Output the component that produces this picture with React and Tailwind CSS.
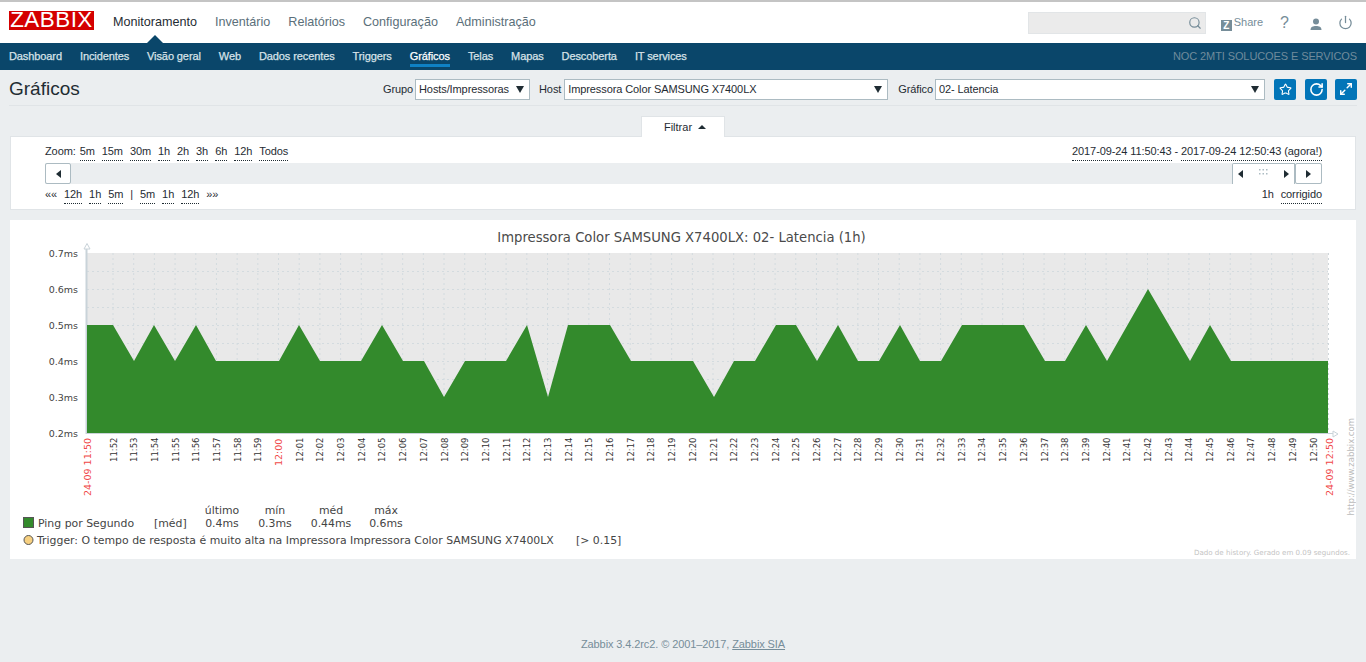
import { Search, Power, Star, RotateCw, Maximize2 } from 'lucide-react';

const mainMenu = ['Monitoramento', 'Inventário', 'Relatórios', 'Configuração', 'Administração'];
const subMenu = ['Dashboard', 'Incidentes', 'Visão geral', 'Web', 'Dados recentes', 'Triggers', 'Gráficos', 'Telas', 'Mapas', 'Descoberta', 'IT services'];
const zoomLinks = ['5m', '15m', '30m', '1h', '2h', '3h', '6h', '12h', 'Todos'];

// [x, value] pairs read off the graph
const points = [
  [87, 0.5], [113, 0.5], [134, 0.4], [154, 0.5], [175, 0.4], [196, 0.5], [216, 0.4], [279, 0.4], [299, 0.5], [320, 0.4],
  [361, 0.4], [382, 0.5], [403, 0.4], [424, 0.4], [444, 0.3], [465, 0.4], [506, 0.4], [527, 0.5], [548, 0.3], [568, 0.5],
  [610, 0.5], [631, 0.4], [693, 0.4], [714, 0.3], [734, 0.4], [755, 0.4], [776, 0.5], [796, 0.5], [817, 0.4], [838, 0.5],
  [858, 0.4], [879, 0.4], [900, 0.5], [920, 0.4], [941, 0.4], [962, 0.5], [1024, 0.5], [1045, 0.4], [1065, 0.4], [1086, 0.5],
  [1107, 0.4], [1148, 0.6], [1190, 0.4], [1210, 0.5], [1231, 0.4], [1328, 0.4],
];

const valueY = (v) => 433 - (v - 0.2) * 360;
const areaPath = `M87 433 ${points.map(([x, v]) => `L${x} ${valueY(v)}`).join(' ')} L1328 433 Z`;

const minuteLabels = [];
for (let m = 0; m <= 58; m++) {
  const total = 11 * 60 + 52 + m;
  const label = `${Math.floor(total / 60)}:${String(total % 60).padStart(2, '0')}`;
  minuteLabels.push({ label, x: 113 + m * 20.69, red: label === '12:00' });
}

const DottedLink = ({ children }) => (
  <span className="border-b border-dotted border-[#1f2c33]">{children}</span>
);

const Select = ({ width, children }) => (
  <div className={`${width} h-[21px] bg-white border border-[#acbbc2] flex items-center justify-between pl-[3px] pr-[5px]`}>
    <span className="tracking-[-0.1px]">{children}</span>
    <span className="w-0 h-0 border-x-[4px] border-x-transparent border-t-[7px] border-t-[#1f2c33]" />
  </div>
);

const IconButton = ({ children }) => (
  <div className="w-[22px] h-[21px] rounded-[2px] bg-[#0275b8] flex items-center justify-center text-white">{children}</div>
);

const ArrowLeft = () => <span className="w-0 h-0 border-y-[4px] border-y-transparent border-r-[5px] border-r-[#1f2c33]" />;
const ArrowRight = () => <span className="w-0 h-0 border-y-[4px] border-y-transparent border-l-[5px] border-l-[#1f2c33]" />;

const UserIcon = () => (
  <svg width="14" height="14" viewBox="0 0 14 14" className="ml-[20px] mt-[2px]" fill="#768d99">
    <circle cx="7" cy="4.5" r="3" />
    <path d="M1.5 13 C1.5 9.8 4 9 7 9 C10 9 12.5 9.8 12.5 13 Z" />
  </svg>
);

const Grip = () => (
  <svg width="9" height="6" viewBox="0 0 9 6" className="-mt-[4px]" fill="#acbbc2">
    {[0, 4].map((y) => [0, 3.5, 7].map((x) => <rect key={`${x}-${y}`} x={x} y={y} width="1.5" height="1.5" />))}
  </svg>
);

const Graph = () => (
  <svg width="1346" height="339" viewBox="10 220 1346 339" className="block" style={{ fontFamily: '"DejaVu Sans", sans-serif' }}>
    <text x="681.5" y="242" textAnchor="middle" fontSize="13.2" fill="#4a4a4a">Impressora Color SAMSUNG X7400LX: 02- Latencia (1h)</text>

    <rect x="87" y="253" width="1241" height="180" fill="#e9e9e9" />
    {[271, 289, 307, 325, 343, 361, 379, 397, 415].map((y) => (
      <line key={y} x1="87" x2="1328" y1={y + 0.5} y2={y + 0.5} stroke="#d3dbdf" strokeDasharray="2 3" />
    ))}
    {minuteLabels.map(({ x, label }) => (
      <line key={label} x1={x} x2={x} y1="253" y2="433" stroke="#d3dbdf" strokeDasharray="2 3" />
    ))}
    <line x1="1328.5" x2="1328.5" y1="253" y2="433" stroke="#cfd6da" strokeDasharray="2 3" />

    <line x1="86.5" x2="86.5" y1="248" y2="434" stroke="#c9d3d9" strokeWidth="2" />
    <path d={areaPath} fill="#338a2c" />
    <line x1="86" x2="1333" y1="433.5" y2="433.5" stroke="#c9d3d9" />
    <path d="M84 249 L87 243.5 L90 249 Z" fill="#fff" stroke="#c9d3d9" />
    <path d="M1333 431 L1338 434 L1333 437 Z" fill="#fff" stroke="#c9d3d9" />

    {[0.7, 0.6, 0.5, 0.4, 0.3, 0.2].map((v) => (
      <text key={v} x="78" y={valueY(v) + 3.5} textAnchor="end" fontSize="9.5" fill="#444">{v}ms</text>
    ))}

    {minuteLabels.map(({ label, x, red }) => (
      <text
        key={label}
        transform={`translate(${x + 3.5} ${red ? 466 : 462}) rotate(-90)`}
        fontSize={red ? 9.5 : 8.5}
        fill={red ? '#f04848' : '#333'}
      >
        {label}
      </text>
    ))}
    <text transform="translate(91 496) rotate(-90)" fontSize="9.5" fill="#f04848">24-09 11:50</text>
    <text transform="translate(1333 496) rotate(-90)" fontSize="9.5" fill="#f04848">24-09 12:50</text>
    <text transform="translate(1354 515.5) rotate(-90)" fontSize="8.5" fill="#bbb">http://www.zabbix.com</text>

    <g fontSize="10.9" fill="#444">
      <text x="222" y="514" textAnchor="middle">último</text>
      <text x="275" y="514" textAnchor="middle">mín</text>
      <text x="331" y="514" textAnchor="middle">méd</text>
      <text x="386" y="514" textAnchor="middle">máx</text>

      <rect x="23.5" y="517.5" width="10" height="10" fill="#338a2c" stroke="#555" />
      <text x="38" y="527">Ping por Segundo</text>
      <text x="154" y="527">[méd]</text>
      <text x="222" y="527" textAnchor="middle">0.4ms</text>
      <text x="275" y="527" textAnchor="middle">0.3ms</text>
      <text x="331" y="527" textAnchor="middle">0.44ms</text>
      <text x="386" y="527" textAnchor="middle">0.6ms</text>

      <circle cx="28.5" cy="540" r="4.5" fill="#f7d080" stroke="#555" />
      <text x="37" y="544">Trigger: O tempo de resposta é muito alta na Impressora Impressora Color SAMSUNG X7400LX</text>
      <text x="576" y="544">[&gt; 0.15]</text>
    </g>
    <text x="1350" y="555" textAnchor="end" fontSize="7.1" fill="#c4c4c4">Dado de history. Gerado em 0.09 segundos.</text>
  </svg>
);

export default function App() {
  return (
    <div className="min-h-[662px] bg-[#ebeef0] flex flex-col text-[11px] text-[#1f2c33]" style={{ fontFamily: '"Liberation Sans", Arial, sans-serif' }}>
      {/* Top menu */}
      <header className="h-[43px] bg-white border-t-2 border-[#c4c4c4] flex items-center pl-[9px] pr-[13px]">
        <div className="w-[85px] h-[19px] bg-[#d40000] text-white flex justify-center text-[22.4px] leading-[18px] tracking-[0.5px] mb-[4px]">ZABBIX</div>
        <nav className="flex ml-[10px] text-[12.6px] text-[#5b6f7a] mb-[1px]">
          {mainMenu.map((item, i) => (
            <span key={item} className={`px-[9px] ${i === 0 ? 'text-[#1f2c33]' : ''}`}>{item}</span>
          ))}
        </nav>
        <div className="ml-auto flex items-center">
          <div className="w-[178px] h-[22px] bg-[#ebebeb] border border-[#e2e5e7] flex items-center justify-end pr-[3px] text-[#768d99]">
            <Search size={14} />
          </div>
          <div className="ml-[15px] flex items-start text-[#768d99]">
            <span className="w-[11px] h-[11px] mt-[5px] bg-[#768d99] text-white text-[10px] font-bold leading-[11px] text-center">Z</span>
            <span className="ml-[2px] leading-[13px] mt-[1px]">Share</span>
          </div>
          <span className="ml-[17px] text-[#768d99] text-base leading-none">?</span>
          <UserIcon />
          <Power size={15} className="ml-[15px] text-[#768d99]" />
        </div>
      </header>

      {/* Sub menu */}
      <nav className="relative h-[27px] bg-[#0a466a] flex items-center pl-[9px] pr-[9px]">
        <span className="absolute left-[147px] -top-[8px] w-0 h-0 border-x-[8px] border-x-transparent border-b-[8px] border-b-[#0a466a]" />
        <div className="flex gap-[18px] tracking-[-0.1px] [-webkit-text-stroke:0.25px]">
          {subMenu.map((item) => (
            <span key={item} className={item === 'Gráficos' ? 'relative text-white' : 'text-[#d8e2e8]'}>
              {item}
              {item === 'Gráficos' && <span className="absolute left-0 right-0 top-[16px] h-[3px] bg-[#0f81c4]" />}
            </span>
          ))}
        </div>
        <span className="ml-auto text-[#6f8b9c] tracking-[-0.1px]">NOC 2MTI SOLUCOES E SERVICOS</span>
      </nav>

      <main className="flex-1 px-[9px] flex flex-col">
        {/* Title row */}
        <div className="h-[36px] border-b border-[#e0e4e7] flex items-center">
          <h1 className="text-[19px] text-[#1f2c33] leading-none mt-[2px]">Gráficos</h1>
          <div className="ml-auto flex items-center mt-[3px] tracking-[-0.1px]">
            <span className="mr-[2px]">Grupo</span>
            <Select width="w-[115px]">Hosts/Impressoras</Select>
            <span className="ml-[9px] mr-[3px]">Host</span>
            <Select width="w-[324px]">Impressora Color SAMSUNG X7400LX</Select>
            <span className="ml-[10px] mr-[2px]">Gráfico</span>
            <Select width="w-[330px]">02- Latencia</Select>
            <div className="ml-[9px] flex gap-[8px]">
              <div className="mr-px"><IconButton><Star size={13} /></IconButton></div>
              <IconButton><RotateCw size={15} strokeWidth={2.5} /></IconButton>
              <IconButton><Maximize2 size={14} strokeWidth={2.5} /></IconButton>
            </div>
          </div>
        </div>

        {/* Filter tab */}
        <div className="flex justify-center mt-[10px] -mb-px">
          <div className="relative w-[84px] h-[21px] ml-[-1px] pl-[5px] bg-white border border-b-0 border-[#e0e4e7] flex items-center justify-center gap-[6px]">
            Filtrar
            <span className="w-0 h-0 border-x-[4px] border-x-transparent border-b-[4px] border-b-[#1f2c33]" />
          </div>
        </div>

        {/* Time controls */}
        <section className="mx-px h-[74px] bg-white border border-[#e0e4e7] pl-[34px] pr-[33px] pt-[6px] tracking-[-0.1px]">
          <div className="flex justify-between h-[20px]">
            <div className="flex gap-[7px] items-start">
              <span className="-mr-[3px]">Zoom:</span>
              {zoomLinks.map((z) => <DottedLink key={z}>{z}</DottedLink>)}
            </div>
            <div className="flex gap-[3px] items-start">
              <DottedLink>2017-09-24 11:50:43</DottedLink>
              <span>-</span>
              <DottedLink>2017-09-24 12:50:43 (agora!)</DottedLink>
            </div>
          </div>
          <div className="h-[21px] bg-[#ebeef0] flex justify-between">
            <div className="w-[26px] bg-white border border-[#acbbc2] rounded-[2px] flex items-center justify-center"><ArrowLeft /></div>
            <div className="flex">
              <div className="w-[63px] bg-white border border-b-0 border-[#acbbc2] rounded-tl-[2px] flex items-center justify-between px-[5px]">
                <ArrowLeft />
                <Grip />
                <ArrowRight />
              </div>
              <div className="w-[27px] bg-white border border-[#acbbc2] rounded-[2px] flex items-center justify-center"><ArrowRight /></div>
            </div>
          </div>
          <div className="flex justify-between mt-[2px]">
            <div className="flex gap-[7px] items-start">
              <span>««</span>
              <DottedLink>12h</DottedLink>
              <DottedLink>1h</DottedLink>
              <DottedLink>5m</DottedLink>
              <span>|</span>
              <DottedLink>5m</DottedLink>
              <DottedLink>1h</DottedLink>
              <DottedLink>12h</DottedLink>
              <span>»»</span>
            </div>
            <div className="flex gap-[7px] items-start">
              <span>1h</span>
              <DottedLink>corrigido</DottedLink>
            </div>
          </div>
        </section>

        {/* Graph */}
        <section className="mx-px mt-[10px] bg-white">
          <Graph />
        </section>

        <footer className="mt-[77px] text-center text-[#768d99] tracking-[-0.1px]">
          Zabbix 3.4.2rc2. © 2001–2017, <span className="underline">Zabbix SIA</span>
        </footer>
      </main>
    </div>
  );
}
